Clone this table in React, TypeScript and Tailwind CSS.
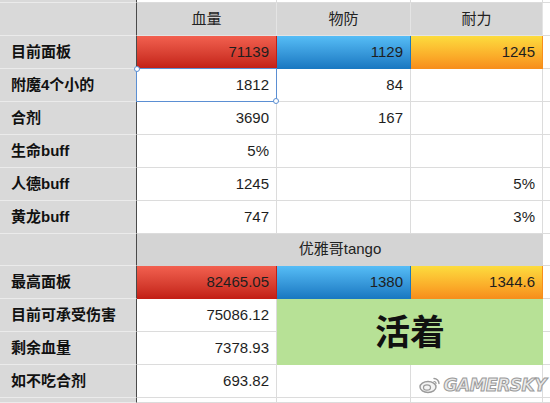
import React from "react";

const cjk = "font-['Liberation_Sans','Noto_Sans_CJK_SC',sans-serif]";

type Cell = {
  v?: string;
  tone?: "red" | "blue" | "orange" | "gray" | "white";
};

const tones: Record<string, string> = {
  red: "bg-linear-to-b from-[#f2604f] to-[#c31f16] border-[#c31f16]",
  blue: "bg-linear-to-b from-[#56bdf6] to-[#1a79c2] border-[#1a79c2]",
  orange: "bg-linear-to-b from-[#fcdc3e] to-[#f78f1c] border-[#f78f1c]",
  gray: "bg-[#d6d6d6] border-[#e2e2e2]",
  white: "bg-white border-[#dcdcdc]",
};

function Label({ text }: { text?: string }) {
  return (
    <div className="flex items-center pl-[11px] bg-[#d9d9d9] border-b border-[#ebebeb] border-r border-r-[#4a4a4a] text-[15px] font-bold text-[#111]">
      {text}
    </div>
  );
}

function Num({ v, tone = "white" }: Cell) {
  return (
    <div
      className={`flex items-center justify-end pr-[7px] border-b border-r text-[15px] text-[#1e1e1e] ${tones[tone]}`}
    >
      {v}
    </div>
  );
}

function Head({ v }: { v: string }) {
  return (
    <div className="flex items-center justify-center border-b border-r border-[#e4e4e4] bg-[#d6d6d6] text-[15px] text-[#222]">
      {v}
    </div>
  );
}

function Tail() {
  return <div className="border-b border-[#dcdcdc] bg-white" />;
}

export default function App() {
  return (
    <div className={`relative w-[550px] h-[403px] overflow-hidden bg-white ${cjk}`}>
      <div className="grid grid-cols-[137px_140px_134px_132px_7px] grid-rows-[3px_repeat(7,33px)_32px_repeat(4,33px)_1fr] h-full">
        {/* partial top row */}
        <div className="bg-[#d9d9d9] border-b border-[#ebebeb] border-r border-r-[#4a4a4a]" />
        <div className="border-b border-r border-[#dcdcdc]" />
        <div className="border-b border-r border-[#dcdcdc]" />
        <div className="border-b border-r border-[#dcdcdc]" />
        <Tail />

        {/* header */}
        <Label />
        <Head v="血量" />
        <Head v="物防" />
        <Head v="耐力" />
        <Tail />

        <Label text="目前面板" />
        <Num v="71139" tone="red" />
        <Num v="1129" tone="blue" />
        <Num v="1245" tone="orange" />
        <Tail />

        <Label text="附魔4个小的" />
        <div className="relative flex items-center justify-end pr-[7px] border-b border-r border-[#dcdcdc] text-[15px] text-[#1e1e1e]">
          1812
          <div className="absolute inset-[-1px] border border-[#5b8fd3]" />
          <div className="absolute -left-[3px] -top-[3px] w-[6px] h-[6px] rounded-full border border-[#5b8fd3] bg-white" />
          <div className="absolute -right-[3px] -bottom-[3px] w-[6px] h-[6px] rounded-full border border-[#5b8fd3] bg-white" />
        </div>
        <Num v="84" />
        <Num />
        <Tail />

        <Label text="合剂" />
        <Num v="3690" />
        <Num v="167" />
        <Num />
        <Tail />

        <Label text="生命buff" />
        <Num v="5%" />
        <Num />
        <Num />
        <Tail />

        <Label text="人德buff" />
        <Num v="1245" />
        <Num />
        <Num v="5%" />
        <Tail />

        <Label text="黄龙buff" />
        <Num v="747" />
        <Num />
        <Num v="3%" />
        <Tail />

        <Label />
        <div className="col-span-3 flex items-center justify-center bg-[#d4d4d4] border-b border-[#d4d4d4] text-[15px] text-[#222]">
          优雅哥tango
        </div>
        <Tail />

        <Label text="最高面板" />
        <Num v="82465.05" tone="red" />
        <Num v="1380" tone="blue" />
        <Num v="1344.6" tone="orange" />
        <Tail />

        <Label text="目前可承受伤害" />
        <Num v="75086.12" />
        <div className="col-span-2 row-span-2 flex items-center justify-center bg-[#b7e196] text-[35px] font-bold text-[#111] leading-none">
          活着
        </div>
        <Tail />

        <Label text="剩余血量" />
        <Num v="7378.93" />
        <Tail />

        <Label text="如不吃合剂" />
        <Num v="693.82" />
        <Num />
        <Num />
        <Tail />

        <Label />
        <Num />
        <Num />
        <Num />
        <Tail />
      </div>

      {/* watermark */}
      <div className="absolute right-[4px] bottom-[5px] flex items-center gap-[3px]">
        <svg width="22" height="18" viewBox="0 0 22 18" fill="none">
          <ellipse cx="9" cy="11" rx="8" ry="5.5" stroke="#9a9a9a" strokeWidth="1.4" fill="#f4f4f4" />
          <ellipse cx="8" cy="11.5" rx="3.5" ry="2.6" stroke="#9a9a9a" strokeWidth="1.2" />
          <path d="M15 2.5a5 5 0 0 1 5 5" stroke="#9a9a9a" strokeWidth="1.4" strokeLinecap="round" />
          <path d="M15 5.5a2 2 0 0 1 2 2" stroke="#9a9a9a" strokeWidth="1.2" strokeLinecap="round" />
        </svg>
        <span className="font-['DejaVu_Sans',sans-serif] text-[17px] font-bold italic tracking-[-0.5px] text-[#e9e9e9] [-webkit-text-stroke:1px_#9a9a9a]">
          GAMERSKY
        </span>
      </div>
    </div>
  );
}
